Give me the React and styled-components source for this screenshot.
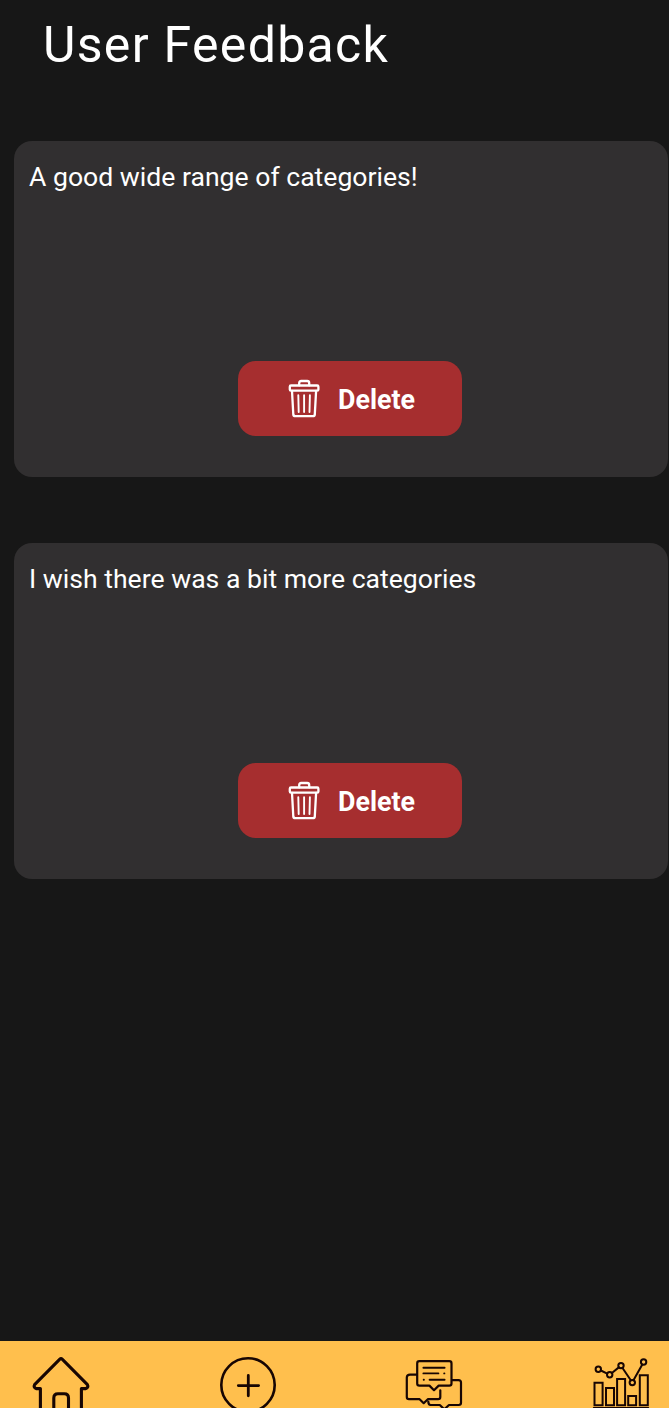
import React from "react";
import styled, { createGlobalStyle } from "styled-components";

const GlobalStyle = createGlobalStyle`
  *, *::before, *::after { box-sizing: border-box; }
  body {
    margin: 0;
    background: #171717;
    font-family: Roboto, "Liberation Sans", sans-serif;
    color: #fff;
  }
`;

const Screen = styled.div`
  display: flex;
  flex-direction: column;
  height: 1408px;
  overflow: hidden;
  background: #171717;
`;

const Title = styled.h1`
  margin: 0;
  padding: 15px 0 0 43px;
  font-size: 50px;
  line-height: 60px;
  font-weight: 400;
  letter-spacing: 1.3px;
  white-space: nowrap;
`;

const FeedbackList = styled.main`
  flex: 1;
  display: flex;
  flex-direction: column;
  gap: 66px;
  padding: 66px 1px 0 14px;
`;

const Card = styled.article`
  display: flex;
  flex-direction: column;
  justify-content: space-between;
  height: 336px;
  padding: 20px 14px 41px 15px;
  border-radius: 18px;
  background: #312f30;
`;

const Message = styled.p`
  margin: 0;
  font-size: 26.6px;
  line-height: 32px;
  white-space: nowrap;
`;

const DeleteButton = styled.button`
  display: flex;
  align-items: center;
  gap: 17px;
  width: 224px;
  height: 75px;
  margin: 0 0 0 209px;
  padding: 0 0 0 49px;
  border: 0;
  border-radius: 18px;
  background: #a62e2f;
  color: #fff;
  font: 700 26.8px/32px Roboto, "Liberation Sans", sans-serif;
`;

const ButtonLabel = styled.span`
  padding-top: 2px;
`;

const NavBar = styled.nav`
  display: flex;
  justify-content: space-between;
  height: 67px;
  padding: 0 18px 0 31px;
  background: #ffbf4d;
`;

const NavItem = styled.a`
  display: block;
  width: 60px;
  height: 67px;
`;

const Icon = styled.svg`
  display: block;
  fill: none;
  stroke: ${({ $color }) => $color || "#180603"};
  stroke-width: ${({ $weight }) => $weight};
  stroke-linecap: round;
  stroke-linejoin: round;
`;

const TrashIcon = () => (
  <Icon $color="#fff" $weight={2.3} width="34" height="42" viewBox="0 0 34 42">
    <rect x="2.8" y="7.5" width="28.6" height="5.2" rx="1.2" />
    <path d="M12.2 7.3V5Q12.2 3 14.2 3H20.2Q22.2 3 22.2 5V7.3" />
    <path d="M5 13L6.3 36.5Q6.5 38.2 8.2 38.2H25.9Q27.6 38.2 27.8 36.5L29.1 13" />
    <path d="M11.3 17.3L11.7 34M17.1 17.3V34M22.9 17.3L22.5 34" strokeWidth="1.9" />
  </Icon>
);

const HomeIcon = () => (
  <Icon $weight={3.1} width="60" height="67" viewBox="0 0 60 67">
    <path d="M9.4 72V47.6H5.2Q2.2 46.3 3.6 43.6L28.6 18.3Q30 17 31.4 18.3L56.4 43.6Q57.8 46.3 54.8 47.6H50.4V72" />
    <path d="M22.8 72V57Q22.8 52.8 27 52.8H33.3Q37.5 52.8 37.5 57V72" />
  </Icon>
);

const AddIcon = () => (
  <Icon $weight={2.6} width="60" height="67" viewBox="0 0 60 67">
    <circle cx="30" cy="44" r="26.7" />
    <path d="M20.3 44.6H40.6M30.3 34.5V54.8" strokeWidth="2.8" />
  </Icon>
);

const ChatIcon = () => (
  <Icon $weight={2.2} width="60" height="67" viewBox="0 0 60 67">
    <path d="M15.4 20.2H45.3Q47.5 20.2 47.5 22.4V42.4Q47.5 44.6 45.3 44.6H34.7L30 49.2L25.4 44.6H15.4Q13.2 44.6 13.2 42.4V22.4Q13.2 20.2 15.4 20.2Z" />
    <path d="M12.6 33.6H6Q2.8 33.6 2.8 36.4V56Q2.8 58.2 5 58.2H15.6L19.7 62.2L23.8 58.2H34.1Q36.3 58.2 36.3 56V49.3" />
    <path d="M48 39.2H54.4Q57 39.2 57 41.6V61.8Q57 64 54.8 64H45L40.3 68.3L35.8 64H26.6Q24.4 64 24.3 60.5" />
    <path d="M19.4 26.7H40.6M19.4 32.4H34.4M40.2 32.4H40.4M19.7 38.7H19.9M25.6 38.7H40.6" strokeWidth="1.9" />
  </Icon>
);

const ChartIcon = () => (
  <Icon $weight={2} width="60" height="67" viewBox="0 0 60 67">
    <circle cx="7.3" cy="28.3" r="2.7" />
    <circle cx="18.7" cy="33.8" r="2.7" />
    <circle cx="30" cy="24.6" r="2.7" />
    <circle cx="41.3" cy="41.6" r="2.7" />
    <circle cx="52.6" cy="21" r="2.7" />
    <path d="M9.9 29.5L16.2 32.6M20.9 32L27.8 26.4M31.5 27L39.8 39.2M42.6 39.1L51.3 23.5" />
    <path d="M3.5 64.3V41.8H11.6V64.3ZM15 64.3V47H23V64.3ZM26.1 64.3V38H34.1V64.3ZM37.2 64.3V55H45.1V64.3ZM48.8 64.3V34.2H56.8V64.3Z" strokeLinejoin="miter" />
    <path d="M2.6 66.8H57.4" strokeWidth="1.4" />
  </Icon>
);

const feedback = [
  { id: 1, text: "A good wide range of categories!" },
  { id: 2, text: "I wish there was a bit more categories" },
];

const tabs = [
  { name: "Home", Glyph: HomeIcon },
  { name: "Add", Glyph: AddIcon },
  { name: "Feedback", Glyph: ChatIcon },
  { name: "Statistics", Glyph: ChartIcon },
];

export default function App() {
  return (
    <>
      <GlobalStyle />
      <Screen>
        <Title>User Feedback</Title>
        <FeedbackList>
          {feedback.map(({ id, text }) => (
            <Card key={id}>
              <Message>{text}</Message>
              <DeleteButton type="button">
                <TrashIcon />
                <ButtonLabel>Delete</ButtonLabel>
              </DeleteButton>
            </Card>
          ))}
        </FeedbackList>
        <NavBar>
          {tabs.map(({ name, Glyph }) => (
            <NavItem key={name} aria-label={name}>
              <Glyph />
            </NavItem>
          ))}
        </NavBar>
      </Screen>
    </>
  );
}
